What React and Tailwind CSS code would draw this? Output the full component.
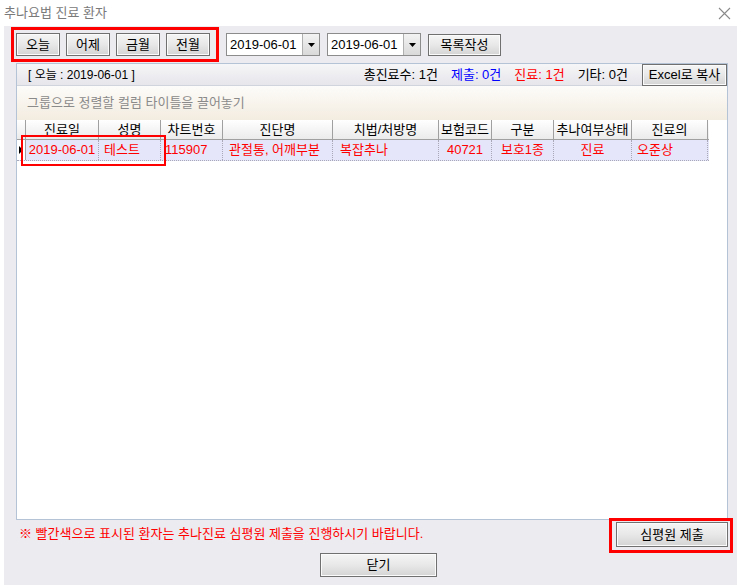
import { useState } from "react";

const columns = [
  { name: "진료일", w: "w-[73px]" },
  { name: "성명", w: "w-[62px]" },
  { name: "차트번호", w: "w-[62px]" },
  { name: "진단명", w: "w-[110px]" },
  { name: "치법/처방명", w: "w-[106px]" },
  { name: "보험코드", w: "w-[53px]" },
  { name: "구분", w: "w-[62px]" },
  { name: "추나여부상태", w: "w-[78px]" },
  { name: "진료의", w: "w-[76px]" },
];

const row = [
  { v: "2019-06-01", align: "justify-center" },
  { v: "테스트", align: "justify-start pl-[5px]" },
  { v: "115907", align: "justify-start pl-[4px]" },
  { v: "관절통, 어깨부분", align: "justify-start pl-[6px]" },
  { v: "복잡추나", align: "justify-start pl-[7px]" },
  { v: "40721", align: "justify-center" },
  { v: "보호1종", align: "justify-center" },
  { v: "진료", align: "justify-center" },
  { v: "오준상", align: "justify-start pl-[5px]" },
];

function Btn({ children, className = "" }) {
  return (
    <button
      className={`flex items-center justify-center border border-[#707070] bg-linear-to-b from-[#f5f5f5] via-[#e8e8e8] to-[#d4d4d4] shadow-[inset_0_0_0_1px_#fbfbfb] text-[13px] text-black ${className}`}
    >
      {children}
    </button>
  );
}

function DateBox({ value }) {
  return (
    <div className="flex h-[23px] border border-[#8c8c8c] bg-white">
      <div className="w-[75px] flex items-center pl-[3px] text-[13px]">{value}</div>
      <div className="w-[17px] flex items-center justify-center border-l border-[#b0b0b0] bg-linear-to-b from-[#f3f3f3] to-[#d9d9d9]">
        <svg width="7" height="4" viewBox="0 0 7 4">
          <path d="M0 0 H7 L3.5 4 Z" fill="#000" />
        </svg>
      </div>
    </div>
  );
}

export default function App() {
  const [rows] = useState([row]);

  return (
    <div className="w-[741px] h-[588px] bg-white flex flex-col font-['Liberation_Sans','Noto_Sans_CJK_KR',sans-serif] text-[12px] text-black overflow-hidden">
      {/* title bar */}
      <div className="h-[26px] flex items-center justify-between pl-[4px] pr-[10px]">
        <span className="text-[13px] text-[#7a7a7a]">추나요법 진료 환자</span>
        <svg width="13" height="13" viewBox="0 0 13 13">
          <path d="M1 1 L12 12 M12 1 L1 12" stroke="#8a8a8a" strokeWidth="1.1" />
        </svg>
      </div>

      <div className="relative mx-[4px] h-[559px] bg-[#ebebf0] flex flex-col pl-[12px] pr-[9px] pt-[7px]">
        {/* top controls */}
        <div className="flex items-center h-[23px]">
          <div className="flex gap-[6px]">
            <Btn className="w-[44px] h-[23px]">오늘</Btn>
            <Btn className="w-[44px] h-[23px]">어제</Btn>
            <Btn className="w-[44px] h-[23px]">금월</Btn>
            <Btn className="w-[44px] h-[23px]">전월</Btn>
          </div>
          <div className="ml-[16px]">
            <DateBox value="2019-06-01" />
          </div>
          <div className="ml-[7px]">
            <DateBox value="2019-06-01" />
          </div>
          <Btn className="ml-[7px] w-[73px] h-[22px]">목록작성</Btn>
        </div>

        {/* grid panel */}
        <div className="mt-[7px] h-[457px] border border-[#b4c4d6] bg-white flex flex-col">
          <div className="h-[22px] flex items-center bg-linear-to-b from-[#f6f6f8] to-[#e6e6eb] border-b border-[#d0d4dc]">
            <span className="ml-[11px] text-[12px]">[ 오늘 : 2019-06-01 ]</span>
            <div className="ml-auto flex items-center gap-[13px] text-[13px]">
              <span>총진료수: 1건</span>
              <span className="text-[#0000ff]">제출: 0건</span>
              <span className="text-[#ff0000]">진료: 1건</span>
              <span>기타: 0건</span>
            </div>
            <Btn className="ml-[14px] w-[85px] h-[22px] text-[13px]">Excel로 복사</Btn>
          </div>

          <div className="h-[34px] flex items-center pl-[10px] bg-linear-to-b from-[#fdfcfa] to-[#f3ece0] text-[13px] text-[#8a8a8a]">
            그룹으로 정렬할 컬럼 타이틀을 끌어놓기
          </div>

          <div className="flex h-[20px] bg-linear-to-b from-[#ffffff] to-[#ebebeb] border-b border-[#a0a0a0] w-[692px]">
            <div className="w-[9px] border-r border-[#a0a0a0]" />
            {columns.map((c) => (
              <div
                key={c.name}
                className={`${c.w} flex items-center justify-center border-r border-[#a0a0a0] text-[13px]`}
              >
                {c.name}
              </div>
            ))}
          </div>

          {rows.map((r, i) => (
            <div key={i} className="flex h-[21px] w-[692px] bg-[#e6e6fa] border-b border-dotted border-[#a8a8b8]">
              <div className="w-[9px] bg-white flex items-center pl-[2px] border-r border-[#a0a0a0]">
                <svg width="4" height="8" viewBox="0 0 4 8">
                  <path d="M0 0 L4 4 L0 8 Z" fill="#000" />
                </svg>
              </div>
              {r.map((c, j) => (
                <div
                  key={j}
                  className={`${columns[j].w} flex items-center ${c.align} border-r border-dotted border-[#a8a8b8] text-[13px] text-[#ff0000]`}
                >
                  {c.v}
                </div>
              ))}
            </div>
          ))}
        </div>

        {/* bottom */}
        <div className="flex justify-between items-start">
          <span className="mt-[4px] ml-[3px] text-[13px] text-[#ff0000]">
            ※ 빨간색으로 표시된 환자는 추나진료 심평원 제출을 진행하시기 바랍니다.
          </span>
          <Btn className="mt-[2px] w-[112px] h-[25px]">심평원 제출</Btn>
        </div>
        <Btn className="mt-[6px] ml-[304px] w-[117px] h-[24px]">닫기</Btn>

        {/* annotation boxes */}
        <div className="absolute left-[7px] top-[1px] w-[208px] h-[35px] border-[3px] border-[#ff0000]" />
        <div className="absolute left-[17px] top-[109px] w-[145px] h-[31px] border-2 border-[#ff0000]" />
        <div className="absolute left-[605px] top-[492px] w-[124px] h-[35px] border-[3px] border-[#ff0000]" />
      </div>
    </div>
  );
}
